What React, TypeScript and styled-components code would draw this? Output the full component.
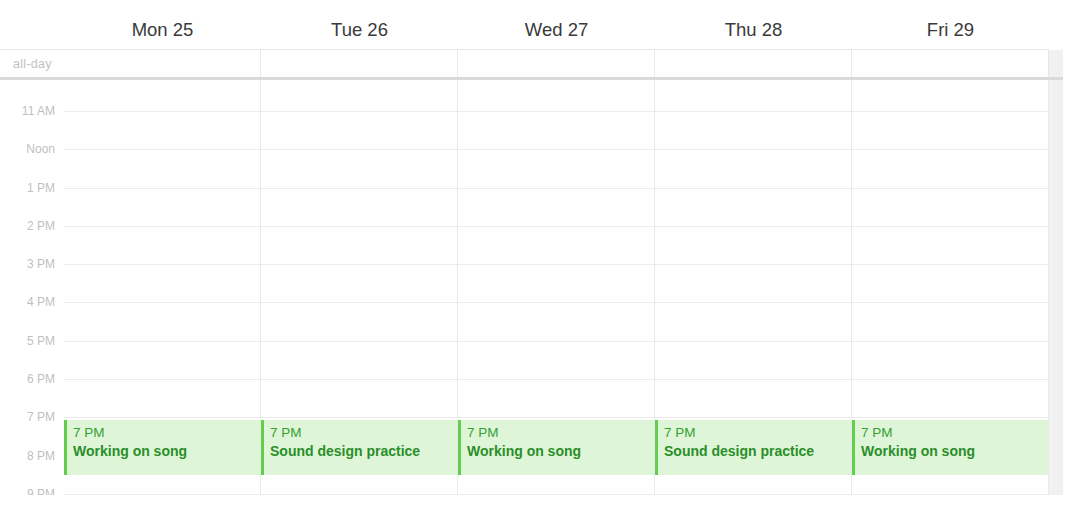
import React from 'react'
import styled, { createGlobalStyle } from 'styled-components'

const GlobalStyle = createGlobalStyle`
    body {
        margin: 0;
        background: #ffffff;
        font-family: 'Liberation Sans', Arial, sans-serif;
    }
`

const HOUR = 38.3
const TOP_OFFSET = 31

const days = [
    { label: 'Mon 25', title: 'Working on song' },
    { label: 'Tue 26', title: 'Sound design practice' },
    { label: 'Wed 27', title: 'Working on song' },
    { label: 'Thu 28', title: 'Sound design practice' },
    { label: 'Fri 29', title: 'Working on song' },
]

const hours = ['11 AM', 'Noon', '1 PM', '2 PM', '3 PM', '4 PM', '5 PM', '6 PM', '7 PM', '8 PM', '9 PM']

export default function App() {
    return (
        <>
            <GlobalStyle />
            <Page>
                <Calendar>
                    <HeaderRow>
                        <Corner />
                        {days.map((d) => (
                            <DayName key={d.label}>{d.label}</DayName>
                        ))}
                        <HeaderGap />
                    </HeaderRow>

                    <AllDayRow>
                        <AllDayLabel>all-day</AllDayLabel>
                        {days.map((d) => (
                            <AllDayCell key={d.label} />
                        ))}
                        <Scrollbar />
                    </AllDayRow>

                    <Body>
                        <Gutter>
                            {hours.map((h) => (
                                <HourLabel key={h}>{h}</HourLabel>
                            ))}
                        </Gutter>
                        {days.map((d) => (
                            <DayColumn key={d.label}>
                                {hours.map((h) => (
                                    <Slot key={h} />
                                ))}
                                <Event>
                                    <EventTime>7 PM</EventTime>
                                    <EventTitle>{d.title}</EventTitle>
                                </Event>
                            </DayColumn>
                        ))}
                        <Scrollbar />
                    </Body>
                </Calendar>
            </Page>
        </>
    )
}

const Page = styled.div`
    width: 1080px;
    height: 520px;
    overflow: hidden;
    background: #ffffff;
`

const Calendar = styled.div`
    width: 1063px;
    display: flex;
    flex-direction: column;
`

const columns = `64px repeat(5, 197px) 14px`

const HeaderRow = styled.div`
    display: grid;
    grid-template-columns: ${columns};
    height: 50px;
    border-bottom: 1px solid #e9e9e9;
    box-sizing: border-box;
    width: 1049px;
`

const Corner = styled.div``
const HeaderGap = styled.div``

const DayName = styled.div`
    display: flex;
    align-items: center;
    justify-content: center;
    padding-top: 11px;
    font-size: 18.5px;
    color: #3a3a3a;
`

const AllDayRow = styled.div`
    display: grid;
    grid-template-columns: ${columns};
    height: 30px;
    border-bottom: 3px solid #dadada;
    box-sizing: border-box;
`

const AllDayLabel = styled.div`
    display: flex;
    align-items: center;
    padding-left: 13px;
    font-size: 12.5px;
    letter-spacing: 0.3px;
    color: #c2c2c2;
`

const AllDayCell = styled.div`
    border-right: 1px solid #e9e9e9;
`

const Scrollbar = styled.div`
    background: #f1f1f1;
    border-left: 1px solid #e6e6e6;
    margin-left: -1px;
`

const Body = styled.div`
    display: grid;
    grid-template-columns: ${columns};
    height: 415px;
    overflow: hidden;
`

const Gutter = styled.div`
    display: flex;
    flex-direction: column;
    padding-top: ${TOP_OFFSET - HOUR / 2}px;
`

const HourLabel = styled.div`
    flex: 0 0 ${HOUR}px;
    display: flex;
    align-items: center;
    justify-content: flex-end;
    padding-right: 9px;
    font-size: 12px;
    color: #bfbfbf;
`

const DayColumn = styled.div`
    position: relative;
    display: flex;
    flex-direction: column;
    padding-top: ${TOP_OFFSET}px;
    border-right: 1px solid #e9e9e9;
`

const Slot = styled.div`
    flex: 0 0 ${HOUR}px;
    box-sizing: border-box;
    border-top: 1px solid #ececec;
`

const Event = styled.div`
    position: absolute;
    left: 0;
    right: 0;
    top: ${TOP_OFFSET + HOUR * 8 + 3}px;
    height: 55px;
    box-sizing: border-box;
    background: #dff5d7;
    border-left: 3px solid #62cf4c;
    padding: 3px 0 0 6px;
    display: flex;
    flex-direction: column;
`

const EventTime = styled.div`
    font-size: 13.5px;
    line-height: 19px;
    color: #35a033;
`

const EventTitle = styled.div`
    font-size: 14px;
    line-height: 19px;
    font-weight: bold;
    color: #2a8e2a;
`
